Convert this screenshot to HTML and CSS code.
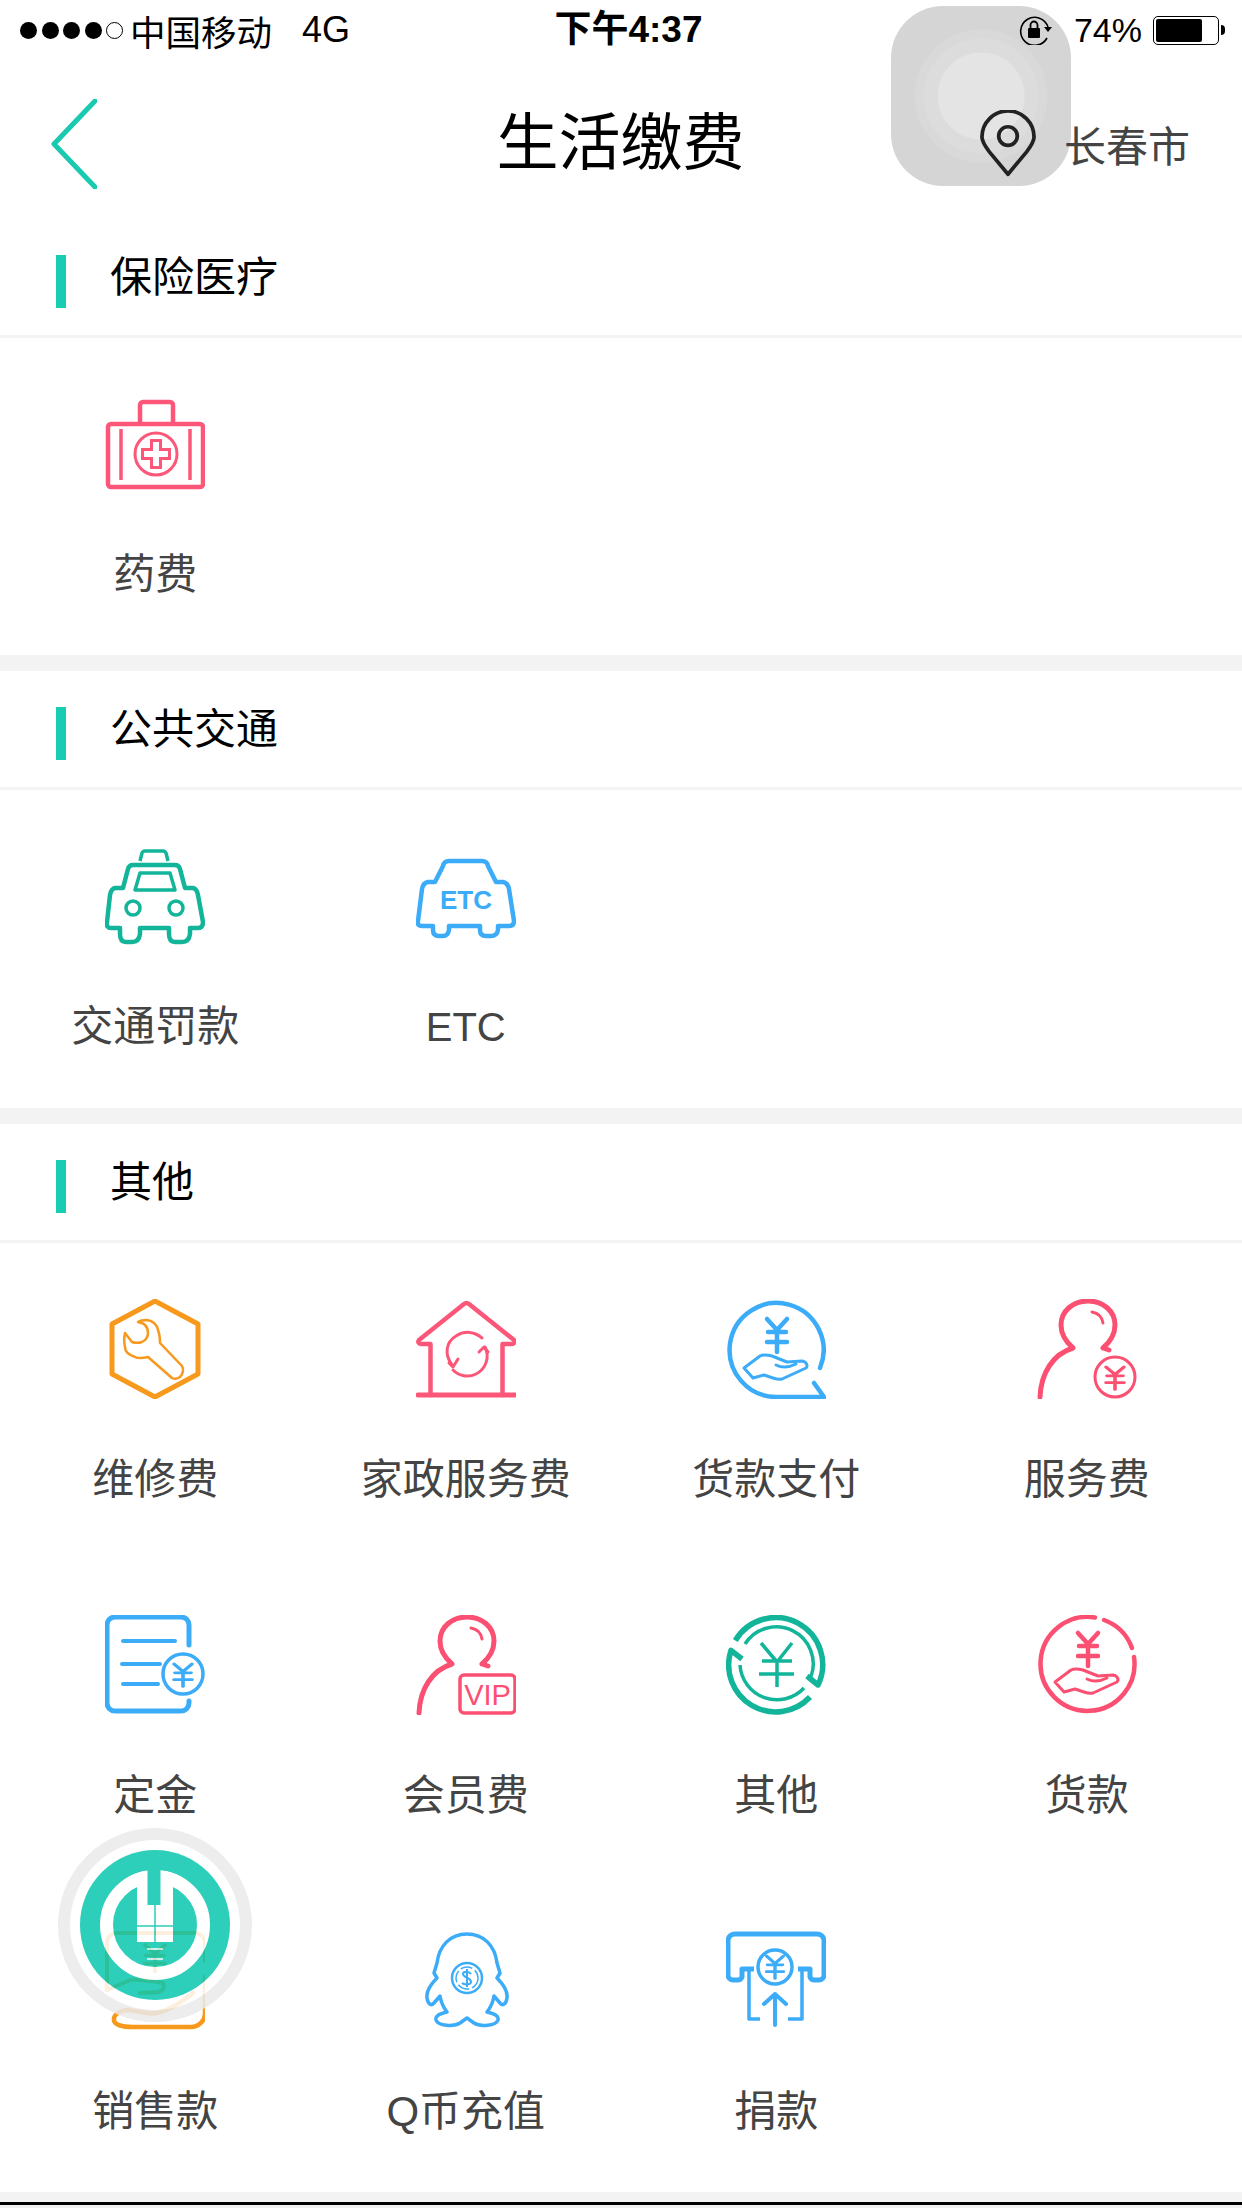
FILE: index.html
```html
<!DOCTYPE html>
<html lang="zh-CN">
  <head>
    <meta charset="UTF-8" />
    <meta name="viewport" content="width=device-width, initial-scale=1.0" />
    <title>生活缴费</title>
    <link rel="stylesheet" href="styles.css">
  </head>
  <body>
    <svg class="defs">
      <g id="yen" stroke-linecap="round" stroke-linejoin="round" fill="none">
        <path d="M0 0L10 11L20 0M1 13H19M0 23H20M10 11V33" />
      </g>
      <g id="hand" stroke-linecap="round" stroke-linejoin="round" fill="none">
        <path d="M18 69L34 57C38 55 42 56 46 57L61 63L76 62C81 63 82 67 80 69L56 80C53 81 50 80 47 79L38 76L27 79Z" />
        <path d="M50 66C56 69 64 68 70 65" />
      </g>
      <g id="person" stroke-linecap="round" stroke-linejoin="round" fill="none">
        <path d="M3 98C4 74 16 55 36 49C28 42 24 35 24 26C24 12 36 2 51 2C66 2 78 12 78 26C78 35 73 43 66 49L72 51" stroke-width="5" />
        <path d="M55 13C61 14 65 18 66 24" stroke-width="3" />
      </g>
    </svg>

    <div class="phone">
      <div class="touch"></div>

      <div class="statusbar">
        <div class="status-left">
          <span class="dots"><i></i><i></i><i></i><i></i><i class="empty"></i></span>
          <span class="carrier">中国移动</span>
          <span class="net">4G</span>
        </div>
        <div class="time">下午4:37</div>
        <div class="status-right">
          <svg class="lock" viewBox="0 0 34 30">
            <path d="M28 23A14 14 0 1 1 29 12" fill="none" stroke="#000" stroke-width="1.600" />
            <path d="M25 12H33L29 17Z" fill="#000" />
            <rect x="9" y="13" width="12" height="10" rx="1" fill="#000" />
            <path d="M11.500 13V10A3.500 3.500 0 0 1 18.500 10V13" fill="none" stroke="#000" stroke-width="1.800" />
          </svg>
          <span class="pct">74%</span>
          <span class="battery"><span class="battery-fill"></span></span>
          <span class="battery-nub"></span>
        </div>
      </div>

      <div class="navbar">
        <svg class="back" viewBox="0 0 46 90">
          <path d="M44 2L3 45L44 88" fill="none" stroke="#19c9b0" stroke-width="5" stroke-linecap="round" stroke-linejoin="round" />
        </svg>
        <h1 class="title">生活缴费</h1>
        <div class="city">
          <svg class="pin" viewBox="0 0 60 72">
            <path d="M30 69L10 45C4 37 2 33 2 29A28 28 0 0 1 58 29C58 33 56 37 50 45Z" fill="none" stroke="#222" stroke-width="4" stroke-linejoin="round" />
            <circle cx="30" cy="28" r="10" fill="none" stroke="#222" stroke-width="4" />
          </svg>
          <span>长春市</span>
        </div>
      </div>

      <section>
        <div class="sec-head"><span class="sec-bar"></span><h2>保险医疗</h2></div>
        <div class="grid">
          <div class="item">
            <svg class="icon pink" viewBox="0 0 100 100">
              <rect x="3" y="30" width="95" height="63" rx="3" stroke-width="4.500" />
              <path d="M35 30V11A3 3 0 0 1 38 8H65A3 3 0 0 1 68 11V30" stroke-width="4.500" />
              <path d="M16 35V86M85 35V86" stroke-width="3.500" />
              <circle cx="51" cy="60" r="21" stroke-width="3" />
              <path d="M46.500 46.500H55.500V55.500H64.500V64.500H55.500V73.500H46.500V64.500H37.500V55.500H46.500Z" stroke-width="3" />
            </svg>
            <div class="label">药费</div>
          </div>
        </div>
      </section>

      <section class="gap">
        <div class="sec-head"><span class="sec-bar"></span><h2>公共交通</h2></div>
        <div class="grid">
          <div class="item">
            <svg class="icon teal" viewBox="0 0 100 100" stroke-linejoin="round">
              <path d="M35 15L37 7Q38 5 40 5H58Q60 5 61 7L63 15" stroke-width="3.500" />
              <path d="M18 42L23 23Q24 19 28 19H70Q74 19 75 23L80 42H88Q92 43 93 49L98 76Q98 82 93 82H85V88Q84 96 77 96H70Q64 96 64 88V82H35V88Q34 96 27 96H21Q15 96 15 88V82H6Q1 82 2 76L5 49Q6 43 10 42Z" stroke-width="4.500" />
              <path d="M35 27H65L70 44H30Z" stroke-width="3.500" />
              <circle cx="28" cy="62" r="7" stroke-width="3.500" />
              <circle cx="71" cy="62" r="7" stroke-width="3.500" />
            </svg>
            <div class="label">交通罚款</div>
          </div>
          <div class="item">
            <svg class="icon blue" viewBox="0 0 100 100" stroke-linejoin="round">
              <path d="M27 20Q28 15 33 15H66Q71 15 72 20L80 36H87Q92 37 93 43L98 75Q98 80 93 80H82V84Q81 90 75 90H70Q64 90 64 84V80H33V84Q32 90 27 90H23Q17 90 17 84V80H6Q1 80 2 75L6 43Q7 37 12 36H19Z" stroke-width="4.500" />
              <text class="etc" x="50" y="63" text-anchor="middle">ETC</text>
            </svg>
            <div class="label latin">ETC</div>
          </div>
        </div>
      </section>

      <section class="gap">
        <div class="sec-head"><span class="sec-bar"></span><h2>其他</h2></div>
        <div class="grid">
          <div class="item">
            <svg class="icon orange" viewBox="0 0 100 100" stroke-linejoin="round">
              <path d="M50 2L93 25V75L50 98L7 75V25Z" stroke-width="5" />
              <path d="M33 23C36 21 39 21 42 21C48 22 52 26 53 31C55 36 55 40 55 44L77 67C79 70 78 75 75 78C72 80 69 80 67 79L43 58C39 59 34 60 30 58C24 56 20 53 20 48C19 43 19 38 20 34L27 43C30 44 34 44 37 43C41 41 43 38 43 34C43 30 42 28 40 26C38 24 35 24 33 23Z" stroke-width="2.500" />
            </svg>
            <div class="label">维修费</div>
          </div>
          <div class="item">
            <svg class="icon pink" viewBox="0 0 100 100" stroke-linejoin="round" stroke-linecap="round">
              <path d="M14.500 96V45H5Q1 44 3 41L48 5Q50.500 3 53 5L98 41Q100 44 96 45H86.500V96" stroke-width="4.500" />
              <path d="M2 96H99" stroke-width="5" />
              <path d="M36 66C28 55 30 43 40 37C49 31 59 33 66 39" stroke-width="3" />
              <path d="M33 64L37 68L42 60" stroke-width="3" />
              <path d="M69 48C74 58 70 70 60 75C52 79 43 77 37 71" stroke-width="3" />
              <path d="M63 53L68 48L72 53" stroke-width="3" />
            </svg>
            <div class="label">家政服务费</div>
          </div>
          <div class="item">
            <svg class="icon blue" viewBox="0 0 100 100" stroke-linejoin="round" stroke-linecap="round">
              <path d="M94 69A47 47 0 1 0 50 98H98L88 84" stroke-width="4.500" />
              <use href="#yen" transform="translate(41 20)" stroke-width="4.500" />
              <use href="#hand" stroke-width="3" />
            </svg>
            <div class="label">货款支付</div>
          </div>
          <div class="item">
            <svg class="icon rose" viewBox="0 0 100 100">
              <use href="#person" />
              <circle cx="78" cy="78" r="20" stroke-width="3" />
              <use href="#yen" transform="translate(69 68) scale(.9 .68)" stroke-width="4" />
            </svg>
            <div class="label">服务费</div>
          </div>

          <div class="item">
            <svg class="icon blue" viewBox="0 0 100 100" stroke-linecap="round">
              <path d="M84 30V10A8 8 0 0 0 76 2H10A8 8 0 0 0 2 10V88A8 8 0 0 0 10 96H76A8 8 0 0 0 84 88V86" stroke-width="5" />
              <path d="M18 26H70M17 49H55M18 69H53" stroke-width="4" />
              <circle cx="78" cy="59" r="20" stroke-width="3.500" />
              <use href="#yen" transform="translate(69 49) scale(.9 .68)" stroke-width="4" />
            </svg>
            <div class="label">定金</div>
          </div>
          <div class="item">
            <svg class="icon rose" viewBox="0 0 100 100">
              <use href="#person" />
              <rect x="44" y="60" width="55" height="38" rx="4" fill="#fff" stroke-width="3.500" />
              <text class="vip" x="71.500" y="90" text-anchor="middle">VIP</text>
            </svg>
            <div class="label">会员费</div>
          </div>
          <div class="item">
            <svg class="icon teal" viewBox="0 0 100 100" stroke-linejoin="round">
              <path d="M9.300 25.500A47 47 0 0 1 92 70L81 61" stroke-width="5.500" />
              <path d="M84 82A47 47 0 0 1 5 35.300L16 44" stroke-width="5.500" />
              <path d="M19 29A37 37 0 0 1 85 61.500" stroke-width="3.500" />
              <path d="M78 73A37 37 0 0 1 14 50" stroke-width="3.500" />
              <path d="M35 28L51 47L66 28M36 46H66M33 59H68M51 47V72" stroke-width="3.500" />
            </svg>
            <div class="label">其他</div>
          </div>
          <div class="item">
            <svg class="icon rose" viewBox="0 0 100 100" stroke-linecap="round" stroke-linejoin="round">
              <path d="M58 2.500A47 47 0 1 0 97 42" stroke-width="4.500" />
              <path d="M67 5A47 47 0 0 1 95 33" stroke-width="4.500" />
              <use href="#yen" transform="translate(41 18)" stroke-width="4.500" />
              <use href="#hand" transform="translate(0 -2)" stroke-width="3" />
            </svg>
            <div class="label">货款</div>
          </div>

          <div class="item">
            <svg class="icon orange" viewBox="0 0 100 100" stroke-linecap="round" stroke-linejoin="round">
              <path d="M100 46V82A14 14 0 0 1 86 96H28C18 96 8 94 9 88C9 83 16 79 24 79C34 80 42 84 52 82C66 79 78 70 88 62" stroke-width="4.500" />
              <path d="M100 30V12A10 10 0 0 0 90 2H12A10 10 0 0 0 2 12V59" stroke-width="4" />
              <path d="M2 59L25 49C34 48 46 50 58 52C60 56 58 60 54 61L35 62" stroke-width="4" />
              <use href="#yen" transform="translate(40 14) scale(1 .8)" stroke-width="4" />
            </svg>
            <div class="label">销售款</div>
          </div>
          <div class="item">
            <svg class="icon blue" viewBox="0 0 100 100" stroke-linejoin="round">
              <path d="M51 3C34 3 23 15 21 32L18 42L21 47C14 54 10 60 11 67C12 74 16 75 18 72L24 65C25 71 27 76 31 81C23 83 19 85 20 89C22 95 38 96 44 92L51 87L58 92C64 96 80 95 82 89C83 85 79 83 71 81C75 76 77 71 78 65L84 72C86 75 90 74 91 67C92 60 88 54 81 47L84 42L81 32C79 15 68 3 51 3Z" stroke-width="3.500" />
              <circle cx="51" cy="47" r="15" stroke-width="2.500" />
              <circle cx="51" cy="47" r="11" stroke-width="1.500" stroke-dasharray="12 3" />
              <path d="M55 43C53 40 47 40 47 43C47 47 55 46 55 51C55 54 48 54 46 52M51 38V56" stroke-width="2" />
            </svg>
            <div class="label">Q币充值</div>
          </div>
          <div class="item">
            <svg class="icon blue" viewBox="0 0 100 100" stroke-linejoin="round">
              <path d="M28 38H16V46A5 5 0 0 1 11 49H7A5 5 0 0 1 2 44V9A7 7 0 0 1 9 3H91A7 7 0 0 1 98 9V44A5 5 0 0 1 93 49H89A5 5 0 0 1 84 46V38H72" stroke-width="5" />
              <circle cx="49" cy="36" r="17" stroke-width="3.500" />
              <use href="#yen" transform="translate(40.500 25) scale(.85 .68)" stroke-width="4" />
              <path d="M23 40V88H34M76 40V88H62" stroke-width="3.500" />
              <path d="M49 94V63M38 73L49 63L60 73" stroke-width="4" stroke-linecap="round" />
            </svg>
            <div class="label">捐款</div>
          </div>
        </div>
      </section>

      <div class="bottom"></div>

      <svg class="float-logo" viewBox="-100 -100 200 200">
        <circle r="91" fill="#fff" stroke="#ebebeb" stroke-width="12" />
        <circle r="75" fill="#09c7af" />
        <circle r="48.500" fill="none" stroke="#fff" stroke-width="13" />
        <rect x="-13" y="-54" width="26" height="38" fill="#fff" />
        <rect x="-18" y="-42" width="36" height="59" fill="#fff" />
        <rect x="-7.500" y="-55" width="13" height="35" fill="#09c7af" />
        <path d="M0 -20V18M-18 1H18" stroke="#09c7af" stroke-width="1.500" />
        <path d="M-8 24H8M-8 34H8" stroke="#fff" stroke-width="1.500" />
      </svg>
    </div>
  </body>
</html>
```

FILE: styles.css
```css
* {
  box-sizing: border-box;
}
html,
body {
  margin: 0;
  padding: 0;
  background: #fff;
}
body {
  font-family: "Liberation Sans", "Noto Sans CJK SC", sans-serif;
  color: #000;
}
.defs {
  display: none;
}
.phone {
  position: relative;
  width: 1242px;
  height: 2208px;
  overflow: hidden;
}

/* assistive touch button, behind the header */
.touch {
  position: absolute;
  left: 891px;
  top: 6px;
  width: 180px;
  height: 180px;
  border-radius: 52px;
  background: radial-gradient(circle at 90px 90px, #e4e4e4 43px, #dcdcdc 44px, #dcdcdc 57px, #d9d9d9 58px, #d9d9d9 66px, #d5d5d5 67px);
}

.statusbar {
  position: relative;
  z-index: 1;
  height: 60px;
  padding: 0 17px 0 20px;
  display: grid;
  grid-template-columns: 1fr auto 1fr;
  align-items: center;
  font-size: 35px;
}
.status-left,
.status-right {
  display: flex;
  align-items: center;
}
.status-right {
  justify-content: flex-end;
}
.dots {
  display: flex;
  gap: 4.500px;
  margin-right: 7px;
}
.dots i {
  width: 17px;
  height: 17px;
  border-radius: 50%;
  background: #000;
}
.dots i.empty {
  background: none;
  border: 1.500px solid #000;
}
.carrier {
  font-size: 35.500px;
}
.net {
  margin-left: 30px;
  font-size: 36px;
}
.time {
  margin-left: 12px;
  font-size: 37px;
  font-weight: 700;
  line-height: 42px;
}
.lock {
  width: 34px;
  height: 30px;
  margin-right: 21px;
}
.pct {
  font-size: 34px;
  margin-right: 11px;
}
.battery {
  width: 66px;
  height: 29px;
  padding: 2px;
  border: 1.500px solid #000;
  border-radius: 5px;
}
.battery-fill {
  display: block;
  width: 46px;
  height: 100%;
  background: #000;
  border-radius: 2px;
}
.battery-nub {
  width: 4px;
  height: 10px;
  margin-left: 2px;
  background: #000;
  border-radius: 0 5px 5px 0;
}

.navbar {
  position: relative;
  z-index: 1;
  height: 159px;
  padding: 8px 52px 0 51px;
  display: grid;
  grid-template-columns: 1fr auto 1fr;
  align-items: center;
}
.back {
  width: 46px;
  height: 90px;
}
.title {
  margin: 0;
  font-size: 62px;
  font-weight: 400;
  line-height: 76px;
}
.city {
  display: flex;
  align-items: center;
  justify-content: flex-end;
  gap: 28px;
  font-size: 42px;
  color: #444;
}
.pin {
  width: 56px;
  height: 67px;
}

.gap {
  border-top: 16px solid #f3f3f3;
}
.sec-head {
  height: 119px;
  padding: 36px 0 0 56px;
  display: flex;
  align-items: flex-start;
  border-bottom: 3px solid #f3f3f3;
}
.sec-bar {
  width: 10px;
  height: 53px;
  background: #19cdb3;
}
.sec-head h2 {
  margin: -3px 0 0 44px;
  font-size: 42px;
  font-weight: 400;
  line-height: 52px;
}
.grid {
  display: grid;
  grid-template-columns: repeat(4, 1fr);
  grid-auto-rows: 316.330px;
  padding-bottom: 1px;
}
section:last-of-type .grid {
  padding-bottom: 0;
}
.item {
  padding-top: 56px;
  display: flex;
  flex-direction: column;
  align-items: center;
}
.icon {
  width: 100px;
  height: 100px;
  fill: none;
  stroke: currentColor;
}
.pink {
  color: #fc5779;
}
.rose {
  color: #fb5072;
}
.teal {
  color: #12b59a;
}
.blue {
  color: #3cacf8;
}
.orange {
  color: #f6991c;
}
.etc {
  font-size: 26px;
  font-weight: 700;
  fill: currentColor;
  stroke: none;
}
.vip {
  font-size: 29px;
  fill: currentColor;
  stroke: none;
}
.label {
  margin-top: 56px;
  font-size: 42px;
  line-height: 50px;
  color: #444;
}
.label.latin {
  font-size: 40px;
}

.bottom {
  height: 16px;
  background: #f3f3f3;
  border-bottom: 3px solid #f0f0f0;
  box-shadow: inset 0 -3px 0 #000;
}

/* floating logo over the grid */
.float-logo {
  position: absolute;
  left: 55px;
  top: 1825px;
  width: 200px;
  height: 200px;
  opacity: 0.85;
}
```
